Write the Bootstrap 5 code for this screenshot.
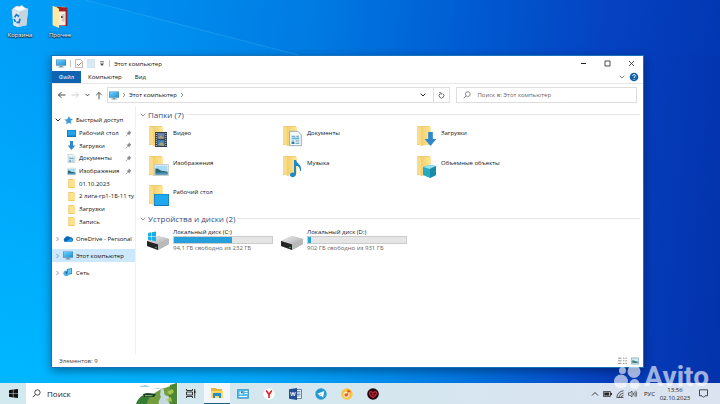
<!DOCTYPE html>
<html lang="ru">
<head>
<meta charset="utf-8">
<meta name="viewport" content="width=device-width, initial-scale=1">
<title>Этот компьютер</title>
<link href="https://cdn.jsdelivr.net/npm/bootstrap@5.3.0/dist/css/bootstrap.min.css" rel="stylesheet">
<style>
body{font-family:"Open Sans","Noto Sans",sans-serif;font-size:6px;line-height:8px;color:#111;overflow:hidden}
a{color:inherit;text-decoration:none}
button{border:0;background:none;padding:0;color:inherit;font:inherit}
svg{display:block;flex:none}
input::placeholder{color:inherit;opacity:1}
.desktop{background:radial-gradient(ellipse 85% 90% at 0 100%,#00b7ff 0,#00b2ffcc 38%,#00a8ff00 100%),linear-gradient(95deg,#00a0f8 0,#0094f2 18%,#007ee4 42%,#0060d4 60%,#0642c2 80%,#0332ab 100%)}
.ray{inset:0;width:100%;height:100%}
.shortcuts{padding:4px 0 0 0}
.shortcut{width:40px;color:#fff;gap:2px;text-shadow:0 1px 1px #000,0 0 2px #000}
.win{inset:55px 76px 15px 51px;background:#fff;border:1px solid #1674bd;box-shadow:0 3px 9px #0016;overflow:hidden}
.titlebar{height:15px}
.titletools{gap:4px;padding-left:4px}
.rule{width:1px;height:7px;background:#c4c4c4}
.winbtn{width:24px;height:15px}
.tabs{height:13px;border-bottom:1px solid #e8e8e8}
.tab-file{width:29px;background:#0f63b0;color:#fff;margin-right:7px}
.tab-next{margin-right:13px}
.tabs button{height:12px}
.navrow{height:22px;padding:3px 6px 3px 5px;gap:6px}
.arrows{gap:5px;width:44px}
.address{flex:355 1 0;border:1px solid #dedede;padding-left:1px;gap:3px}
.finder{flex:180 1 0;border:1px solid #dedede;padding-left:6px;gap:6px;color:#666}
.plain{border:0;outline:0;background:none;padding:0;color:inherit;font:inherit;min-width:0}
.refresh{width:16px;border-left:1px solid #dedede!important}
.side{width:84px;padding-top:8px;border-right:1px solid #f0f0f0;gap:4px}
.quick{height:114px}
.side a{gap:3px;white-space:nowrap}
.side .quick a{flex:1 1 0}
.side .deep{padding-left:15px}
.side .top{padding-left:3px;height:13px}
.side .chosen{background:#cce8ff}
.pin{margin-left:auto;margin-right:3px}
.files{padding:3px 3px 0 4px}
.section-title{font-size:8px;line-height:11px;font-weight:400;color:#354f7c;margin:0;gap:2px}
.section-title::after{content:"";flex:1;height:1px;background:#e7e7e7}
.tiles{display:grid;grid-template-columns:repeat(auto-fill,134px);padding-left:8px}
.folders{height:93px;grid-auto-rows:1fr;padding-top:4px}
.tile{gap:3px;padding-top:1px}
.folders .tile span{padding-top:4px}
.drives{padding-left:6px;padding-top:4px}
.drive{gap:3px}
.meter{width:100px;height:8px;border-radius:0;background:#e5e5e5;border:1px solid #ccc}
.meter .progress-bar{background:#26a0da}
.muted{color:#666}
.status{height:13px;padding:0 4px 0 7px;color:#444}
.taskbar{height:21px;background:linear-gradient(90deg,#d2e9ef,#d6e6ef 60%,#dbe3f1);color:#222}
.start{width:26px}
.seek{width:152px;background:#fff;padding-left:6px;gap:6px;font-size:8px}
.app{width:26px}
.app-on{background:#f1f7fa!important;border-bottom:1px solid #1c5f86!important}
.tray{gap:4px}
.lang{margin:0 2px 0 3px}
.clock{width:36px;text-align:center;margin-right:6px}
.notes{padding-right:12px!important}
.mark-logo{right:11px;bottom:11px;color:#fff;opacity:.62;gap:3px;font:700 28px/32px Roboto,Arial,sans-serif;pointer-events:none}
</style>
<script src="https://cdn.jsdelivr.net/npm/bootstrap@5.3.0/dist/js/bootstrap.bundle.min.js"></script>
</head>
<body class="d-flex flex-column vh-100">
<svg width="0" height="0" class="position-absolute" aria-hidden="true">
<defs>
<linearGradient id="fy" x1="0" x2="1"><stop stop-color="#f3cf68"/><stop offset="1" stop-color="#ffe7a0"/></linearGradient>
<linearGradient id="sc" x1="0" y1="0" x2="1" y2="1"><stop stop-color="#72d3fa"/><stop offset="1" stop-color="#1c94d8"/></linearGradient>
<linearGradient id="mt" x1="0" y1="0" x2="1" y2="1"><stop stop-color="#f1f1f1"/><stop offset="1" stop-color="#a8a8a8"/></linearGradient>
<symbol id="pc" viewBox="0 0 10 9"><path d="M0 .5h10v6.2H0z" fill="#4a87a8"/><path d="M.6 1h8.8v5H.6z" fill="url(#sc)"/><path d="M4 6.7h2v1H4zM2.4 7.6h5.2v.8H2.4z" fill="#6e96aa"/></symbol>
<symbol id="fold" viewBox="0 0 22 22"><path d="M1 1h13v18l-2 1H1z" fill="#f0cd74"/><path d="M1 1l4 2v18l-4-3z" fill="#f8dc89"/><path d="M5 2h10v17l-10 2z" fill="url(#fy)"/></symbol>
<symbol id="sf" viewBox="0 0 9 10"><path d="M1 0h5l2 1v9H1z" fill="#f0c75e"/><path d="M2 1h6v8H2z" fill="#ffe28d"/></symbol>
<symbol id="down" viewBox="0 0 10 12"><path d="M3 0h4v6h3l-5 6-5-6h3z" fill="#2f87cd"/></symbol>
<symbol id="doc" viewBox="0 0 10 12"><path d="M.5.5h6.3l2.7 2.8v8.2h-9z" fill="#f7fbfd" stroke="#91a7b5" stroke-width=".7"/><path d="M2 4.2h2.8M5.6 4.2h2M2 8h2M5 8h3M5 9.7h3" stroke="#4e96b8" stroke-width=".8"/><path d="M2 5.2h6v1.5H2z" fill="#61b5d5"/><path d="M2 8.6h2.2v1.6H2z" fill="#2c789f"/></symbol>
<symbol id="img" viewBox="0 0 14 11"><path d="M.4.4h13.2v10.2H.4z" fill="#fff" stroke="#b6bec4" stroke-width=".7"/><path d="M1.3 1.3h11.4v8.4H1.3z" fill="#a9dbf5"/><path d="M1.3 4.2c3-.5 4.4 2 6.4 2.2 2 .1 3 .2 5 .8v2.5H1.3z" fill="#2b676b"/><path d="M1.3 7.8c4 .6 7-.5 11.4.5v1.4H1.3z" fill="#4d93bd"/></symbol>
<symbol id="pinner" viewBox="0 0 7 7"><path d="M4 .6 6.4 3l-.8.2-1 1.2-.2 1.1L1.6 2.7l1.1-.3L3.8 1.3z" fill="#858b91"/><path d="M2.8 4.2.7 6.3" stroke="#858b91" stroke-width=".7"/></symbol>
<symbol id="rt" viewBox="0 0 4 6"><path d="m1 1 2 2-2 2" fill="none" stroke="#777" stroke-width=".8"/></symbol>
<symbol id="dn" viewBox="0 0 6 4"><path d="m.7.7 2.3 2.3L5.3.7" fill="none" stroke="currentColor" stroke-width=".9"/></symbol>
<symbol id="mag" viewBox="0 0 9 9"><circle cx="5.4" cy="3.5" r="2.7" fill="none" stroke="currentColor" stroke-width=".8"/><path d="M3.4 5.5.8 8.2" stroke="currentColor" stroke-width=".9"/></symbol>
<symbol id="hdd" viewBox="0 0 24 19"><path d="m1 9 11-5 11 3v5l-11 6L1 14z" fill="#a3a3a3"/><path d="m1 9 11-5 11 3-11 5.5z" fill="url(#mt)"/><path d="m1 9 11 3.5V18L1 14z" fill="#252525"/><path d="M12 12.5 23 7v5l-11 6z" fill="#bababa"/><circle cx="10" cy="15.5" r=".7" fill="#6fd47a"/></symbol>
</defs></svg>

<main class="desktop position-relative flex-grow-1">
<svg class="ray position-absolute" viewBox="0 0 720 383" preserveAspectRatio="none" aria-hidden="true"><path d="M85 0 300 55H720V0z" fill="#005bd0" opacity=".07"/><path d="M85 0 310 58" stroke="#5cc8ff" stroke-width="1" opacity=".25"/></svg>
<div class="shortcuts d-flex position-relative">
<a href="#" class="shortcut d-flex flex-column align-items-center"><svg width="20" height="25" viewBox="0 0 22 27"><path d="M2 6 9 2l11 3-2 18-9 2-5-2z" fill="#dce7ee"/><path d="m2 6 8 3 10-4-2 18-9 2-5-2z" fill="#c4d5df"/><path d="m2 6 8 3-1 16-5-2z" fill="#dbe7ee"/><path d="m3 5 4-3 3 1 3-2 3 3 3 1-9 3z" fill="#fafcfd" stroke="#b8c7d1" stroke-width=".5"/><path d="m5 14.5 2-3 3 2M11 16l-1 4H7M6 19.5l-1.500-3" fill="none" stroke="#1979c5" stroke-width="1.8"/></svg><span>Корзина</span></a>
<a href="#" class="shortcut d-flex flex-column align-items-center"><svg width="20" height="25" viewBox="0 0 20 27"><path d="M3 3h12v19H3z" fill="#edc259"/><path d="m7 3 11 1v20L7 23z" fill="#a41d20"/><path d="M8 8h8v15H8z" fill="#f7eee4"/><path d="M12 11h3v8h-3z" fill="#d8c6b9"/><path d="m2 2 7 3v21l-7-3z" fill="#ffe9a3"/><circle cx="12" cy="14" r="1" fill="#333"/></svg><span>Прочее</span></a>
</div>

<section class="win position-absolute d-flex flex-column" aria-label="Этот компьютер">
<header class="titlebar d-flex align-items-center">
<div class="titletools d-flex align-items-center flex-grow-1">
<svg width="10" height="9"><use href="#pc"/></svg><i class="rule"></i>
<button aria-label="Свойства"><svg width="8" height="9" viewBox="0 0 8 9"><path d="M.5.5h5l2 2v6h-7z" fill="#fff" stroke="#a7a7a7" stroke-width=".8"/><path d="m2 5 1.5 1.5 3-3" fill="none" stroke="#df6639"/></svg></button>
<button aria-label="Новая папка"><svg width="8" height="9" viewBox="0 0 8 9"><path d="M.5.5h7v8h-7z" fill="#dbe8f5" stroke="#ccdcea" stroke-width=".7"/></svg></button>
<button aria-label="Настройка панели"><svg width="6" height="6" viewBox="0 0 6 6"><path d="M1 .8h4" stroke="#444" stroke-width=".8"/><path d="M1 2.4h4L3 5z" fill="#444"/></svg></button><i class="rule"></i>
<span>Этот компьютер</span></div>
<button class="winbtn d-flex align-items-center justify-content-center" aria-label="Свернуть"><svg width="7" height="7"><path d="M1 3.5h5" stroke="#222"/></svg></button>
<button class="winbtn d-flex align-items-center justify-content-center" aria-label="Развернуть"><svg width="7" height="7"><path d="M1 1h5v5H1z" fill="none" stroke="#222" stroke-width=".8"/></svg></button>
<button class="winbtn d-flex align-items-center justify-content-center" aria-label="Закрыть"><svg width="7" height="7"><path d="m1 1 5 5M6 1 1 6" stroke="#222" stroke-width=".8"/></svg></button>
</header>
<div class="tabs d-flex align-items-center">
<button class="tab-file">Файл</button><button class="tab-next">Компьютер</button><button>Вид</button>
<button class="ms-auto me-1 text-secondary" aria-label="Развернуть ленту"><svg width="6" height="4"><use href="#dn"/></svg></button>
<button class="me-1" aria-label="Справка"><svg width="10" height="10" viewBox="0 0 10 10"><circle cx="5" cy="5" r="4.3" fill="#1264a8"/><path d="M3.6 3.8c.2-1.8 3-1.5 2.8.1C6.3 4.8 5 4.9 5 6M5 7v.8" fill="none" stroke="#fff"/></svg></button>
</div>
<div class="navrow d-flex">
<div class="arrows d-flex align-items-center">
<button aria-label="Назад"><svg width="9" height="8" viewBox="0 0 9 8"><path d="M8.5 4h-7M4.3 1.2 1.5 4l2.8 2.8" fill="none" stroke="#333" stroke-width=".9"/></svg></button>
<button aria-label="Вперёд"><svg width="9" height="8" viewBox="0 0 9 8"><path d="M.5 4h7M4.7 1.2 7.5 4 4.7 6.8" fill="none" stroke="#ccc" stroke-width=".9"/></svg></button>
<button aria-label="Журнал"><svg width="5" height="4" viewBox="0 0 6 4"><use href="#dn"/></svg></button>
<button aria-label="Вверх"><svg width="8" height="9" viewBox="0 0 8 9"><path d="M4 8.4v-7M1.2 4.2 4 1.4l2.8 2.8" fill="none" stroke="#444" stroke-width=".9"/></svg></button>
</div>
<div class="address d-flex align-items-center"><svg width="10" height="9"><use href="#pc"/></svg><svg width="4" height="6"><use href="#rt"/></svg><a href="#">Этот компьютер</a><svg width="4" height="6"><use href="#rt"/></svg>
<button class="ms-auto me-1" aria-label="Показать адреса"><svg width="6" height="4"><use href="#dn"/></svg></button>
<button class="refresh align-self-stretch d-flex align-items-center justify-content-center" aria-label="Обновить"><svg width="7" height="7" viewBox="0 0 7 7"><path d="M4.9 1.7A2.4 2.4 0 1 1 2.1 1.7M1.3.8h1.9v2" fill="none" stroke="#444" stroke-width=".8"/></svg></button></div>
<label class="finder d-flex align-items-center"><svg width="8" height="8"><use href="#mag"/></svg><input class="plain flex-grow-1" type="text" placeholder="Поиск в: Этот компьютер" aria-label="Поиск в: Этот компьютер"></label>
</div>
<div class="d-flex flex-grow-1">
<nav class="side d-flex flex-column flex-shrink-0" aria-label="Области">
<div class="quick d-flex flex-column">
<a href="#" class="top d-flex align-items-center"><svg width="6" height="4"><use href="#dn"/></svg><svg width="9" height="9" viewBox="0 0 9 9"><path d="m5 0 1 2.6L9 3 6.7 5l.7 3-2.6-1.3L2.2 8.4 2.6 5.5.3 3.6l3-.4z" fill="#3d9adb"/></svg>Быстрый доступ</a>
<a href="#" class="deep d-flex align-items-center"><svg width="9" height="9" viewBox="0 0 9 9"><path d="M0 1h9v7H0z" fill="#1674ba"/><path d="M.6 1.5h7.8v5H.6z" fill="#23a4ee"/></svg>Рабочий стол<svg class="pin" width="7" height="7"><use href="#pinner"/></svg></a>
<a href="#" class="deep d-flex align-items-center"><svg width="9" height="9"><use href="#down"/></svg>Загрузки<svg class="pin" width="7" height="7"><use href="#pinner"/></svg></a>
<a href="#" class="deep d-flex align-items-center"><svg width="9" height="9"><use href="#doc"/></svg>Документы<svg class="pin" width="7" height="7"><use href="#pinner"/></svg></a>
<a href="#" class="deep d-flex align-items-center"><svg width="9" height="9"><use href="#img"/></svg>Изображения<svg class="pin" width="7" height="7"><use href="#pinner"/></svg></a>
<a href="#" class="deep d-flex align-items-center"><svg width="9" height="9"><use href="#sf"/></svg>01.10.2023</a>
<a href="#" class="deep d-flex align-items-center"><svg width="9" height="9"><use href="#sf"/></svg>2 лига-гр1-1Б-11 ту</a>
<a href="#" class="deep d-flex align-items-center"><svg width="9" height="9"><use href="#sf"/></svg>Загрузки</a>
<a href="#" class="deep d-flex align-items-center"><svg width="9" height="9"><use href="#sf"/></svg>Запись</a>
</div>
<a href="#" class="top d-flex align-items-center"><svg width="5" height="6" viewBox="0 0 4 6"><use href="#rt"/></svg><svg width="10" height="8" viewBox="0 0 10 8"><path d="M2.4 7A2.2 2.2 0 0 1 1.8 3 3.1 3.1 0 0 1 7 2.3 2.4 2.4 0 0 1 8.2 7z" fill="#0769ba"/><path d="M2.2 7h6A1.8 1.8 0 0 0 8 3.6z" fill="#28a5e9"/></svg>OneDrive - Personal</a>
<a href="#" class="top chosen d-flex align-items-center"><svg width="5" height="6" viewBox="0 0 4 6"><use href="#rt"/></svg><svg width="10" height="9"><use href="#pc"/></svg>Этот компьютер</a>
<a href="#" class="top d-flex align-items-center"><svg width="5" height="6" viewBox="0 0 4 6"><use href="#rt"/></svg><svg width="10" height="9" viewBox="0 0 10 9"><path d="m4 1 5-1v6l-5 1z" fill="#2d8cca"/><circle cx="3.2" cy="5.3" r="2.8" fill="#55afdb"/><path d="m2 4 3-1-1 4z" fill="#2574b8"/><path d="m5 1.8 3.2-.7v4L5 5.8z" fill="#65c9f3"/></svg>Сеть</a>
</nav>
<div class="files flex-grow-1">
<h2 class="section-title d-flex align-items-center"><svg width="6" height="4" color="#888"><use href="#dn"/></svg>Папки (7)</h2>
<div class="tiles folders">
<a href="#" class="tile d-flex"><svg width="22" height="24" viewBox="0 0 22 24"><use href="#fold" width="22" height="22"/><path d="M7 7h12v15H7z" fill="#343c47"/><path d="M9.5 8h7v6h-7z" fill="#677fba"/><path d="M9.5 15h7v6h-7z" fill="#3e83c1"/><path d="m10 13 3-3 3 4zM10 20l3-3 3 2v2z" fill="#b2a35c"/><path d="M8.3 8v13M17.8 8v13" stroke="#ccd3da" stroke-dasharray="1 1"/></svg><span>Видео</span></a>
<a href="#" class="tile d-flex"><svg width="22" height="24" viewBox="0 0 22 24"><use href="#fold" width="22" height="22"/><use href="#doc" x="7" y="5" width="13" height="17"/></svg><span>Документы</span></a>
<a href="#" class="tile d-flex"><svg width="22" height="24" viewBox="0 0 22 24"><use href="#fold" width="22" height="22"/><use href="#down" x="8" y="7" width="13" height="14"/></svg><span>Загрузки</span></a>
<a href="#" class="tile d-flex"><svg width="22" height="24" viewBox="0 0 22 24"><use href="#fold" width="22" height="22"/><use href="#img" x="6" y="9" width="15" height="12"/></svg><span>Изображения</span></a>
<a href="#" class="tile d-flex"><svg width="22" height="24" viewBox="0 0 22 24"><use href="#fold" width="22" height="22"/><path d="M12 5h2c1 4 6 4 5 11h-1c0-4-2-5-4-5v8c0 4-6 4-6 1 0-2 2-3 4-2z" fill="#2188cb"/></svg><span>Музыка</span></a>
<a href="#" class="tile d-flex"><svg width="22" height="24" viewBox="0 0 22 24"><use href="#fold" width="22" height="22"/><path d="m7 12 6-2 7 1v9l-6 3-7-3z" fill="#27a9c6"/><path d="m7 12 6-2 7 1-6 3z" fill="#90e4ed"/><path d="m14 14 6-3v9l-6 3z" fill="#168ca9"/></svg><span>Объемные объекты</span></a>
<a href="#" class="tile d-flex"><svg width="22" height="24" viewBox="0 0 22 24"><use href="#fold" width="22" height="22"/><path d="M6 10h15v12H6z" fill="#1774ae"/><path d="M6.6 10.5h13.8v10.5H6.6z" fill="#20a8ef"/></svg><span>Рабочий стол</span></a>
</div>
<h2 class="section-title d-flex align-items-center"><svg width="6" height="4" color="#888"><use href="#dn"/></svg>Устройства и диски (2)</h2>
<div class="tiles drives">
<a href="#" class="drive d-flex"><svg width="24" height="25" viewBox="0 0 24 25"><use href="#hdd" y="4" width="24" height="19"/><path d="m2 5 3.5-.7v3.8H2zM6 4.2l4-.7v4.6H6zM2 8.6h3.5v3.8L2 11.7zM6 8.6h4v4.6l-4-.7z" fill="#17aee9"/></svg><span><span class="d-block">Локальный диск (C:)</span><span class="progress meter" role="progressbar" aria-label="Занято на диске C" aria-valuenow="59" aria-valuemin="0" aria-valuemax="100"><span class="progress-bar" style="width:59%"></span></span><span class="d-block muted">94,1 ГБ свободно из 232 ГБ</span></span></a>
<a href="#" class="drive d-flex"><svg width="24" height="25" viewBox="0 0 24 25"><use href="#hdd" y="4" width="24" height="19"/></svg><span><span class="d-block">Локальный диск (D:)</span><span class="progress meter" role="progressbar" aria-label="Занято на диске D" aria-valuenow="3" aria-valuemin="0" aria-valuemax="100"><span class="progress-bar" style="width:3%"></span></span><span class="d-block muted">902 ГБ свободно из 931 ГБ</span></span></a>
</div>
</div>
</div>
<footer class="status d-flex align-items-center"><span>Элементов: 9</span>
<button class="ms-auto me-1" aria-label="Таблица"><svg width="9" height="8" viewBox="0 0 9 8"><path d="M0 1.2h3.5M0 3.8h3.5M0 6.4h3.5M5 1.2h1.5M5 3.8h1.5M5 6.4h1.5M7.5 1.2H9M7.5 3.8H9M7.5 6.4H9" stroke="#888" stroke-width=".9"/></svg></button>
<button aria-label="Крупные значки"><svg width="8" height="8" viewBox="0 0 8 8"><path d="M.4.9h7.2v6.2H.4z" fill="#cfeaf5" stroke="#79a4b4" stroke-width=".7"/><path d="M1.3 3.5c2-1 2.4 1.5 5.4 1v1.6H1.3z" fill="#3c7d7d"/></svg></button></footer>
</section>
</main>

<footer class="taskbar d-flex flex-shrink-0">
<button class="start d-flex align-items-center justify-content-center" aria-label="Пуск"><svg width="9" height="9" viewBox="0 0 9 9"><path d="m0 1.2 3.9-.6v3.6H0zM4.4.6 9 0v4.2H4.4zM0 4.8h3.9v3.6L0 7.8zM4.4 4.8H9V9l-4.6-.6z" fill="#111"/></svg></button>
<label class="seek d-flex align-items-center"><svg width="9" height="9"><use href="#mag"/></svg><input class="plain flex-grow-1" type="search" placeholder="Поиск" aria-label="Поиск">
<svg width="42" height="21" viewBox="0 0 42 21"><path d="M3 4c2-2 4-1 6-2 3 0 3 2 6 2zM16 6l6-1 3 1z" fill="#aacbe6"/><path d="M0 21c3-9 10-11 18-10l12 10z" fill="#357d34"/><path d="M11 21c0-7 9-12 14-15 5-1 9-3 16-6v21z" fill="#749e3d"/><path d="M25 5c6 1 0 7 7 8 4 2-2 4 2 8H23c-2-4 4-6 1-9z" fill="#c3d9df"/><path d="M34 2 41 0v21h-7c2-6-4-8 0-13z" fill="#4c8733"/><path d="m7 11 4-1 9 1-2 3H8z" fill="#173c27"/><path d="m9 12 8 .3-1 1H9z" fill="#8eb65b"/><path d="m31 9 5-3 2 3-4 3zM30 17l5-3 1 5z" fill="#a6c64a"/></svg></label>
<button class="app d-flex align-items-center justify-content-center" aria-label="Представление задач"><svg width="10" height="9" viewBox="0 0 10 9"><path d="M.5 0v1.5h6V0M.5 9V7.5h6V9M.5 3h6v3h-6zM8.7 0v9" fill="none" stroke="#222" stroke-width=".9"/><path d="M8 2h1.5v2H8z" fill="#222"/></svg></button>
<button class="app app-on d-flex align-items-center justify-content-center" aria-label="Проводник"><svg width="12" height="12" viewBox="0 0 12 12"><path d="M0 1h5l1 1h5v9H0z" fill="#e9b63d"/><path d="M0 4h12v7H0z" fill="#ffda65"/><path d="M2 6h8v5H8V9H4v2H2z" fill="#278cc9"/></svg></button>
<button class="app d-flex align-items-center justify-content-center" aria-label="Панель управления"><svg width="12" height="10" viewBox="0 0 12 10"><path d="M.5.5h11v8.8H.5z" fill="#53b9ed" stroke="#378cb9" stroke-width=".7"/><circle cx="4" cy="4" r="1.8" fill="#d5f1ff"/><path d="M4 4V2.2A1.8 1.8 0 0 1 5.8 4z" fill="#126ba5"/><path d="M7.5 2.5h3M7.5 4.5h3M2 7.5h8" stroke="#fff"/></svg></button>
<button class="app d-flex align-items-center justify-content-center" aria-label="Яндекс Браузер"><svg width="12" height="12" viewBox="0 0 12 12"><circle cx="6" cy="6" r="5.7" fill="#fff"/><path d="m3.2 2.5 2.8 4 2.8-4M6 6v4" fill="none" stroke="#e61e27" stroke-width="1.6"/></svg></button>
<button class="app d-flex align-items-center justify-content-center" aria-label="Word"><svg width="13" height="12" viewBox="0 0 13 12"><path d="M6 1.5h6.5v9H6z" fill="#fff" stroke="#2d5395" stroke-width=".7"/><path d="M8 3.5h3.5M8 5h3.5M8 6.5h3.5M8 8h3.5" stroke="#3964a2" stroke-width=".7"/><path d="m0 1.3 8-1.3v12l-8-1.3z" fill="#254f92"/><path d="m1.6 4 1 4L4 4.3 5.3 8l1-4" fill="none" stroke="#fff" stroke-width=".9"/></svg></button>
<button class="app d-flex align-items-center justify-content-center" aria-label="Telegram"><svg width="12" height="12" viewBox="0 0 12 12"><circle cx="6" cy="6" r="5.7" fill="#2498d2"/><path d="m2.3 5.7 7-2.7-1.2 6.4-2.2-1.6-1.1 1L4.5 7z" fill="#fff"/><path d="m4.5 7 3.3-2.5-2.2 3z" fill="#a4cce2"/></svg></button>
<button class="app d-flex align-items-center justify-content-center" aria-label="Яндекс Музыка"><svg width="12" height="12" viewBox="0 0 12 12"><circle cx="6" cy="6" r="5.7" fill="#f8c43e"/><circle cx="5.4" cy="6.8" r="3" fill="#fff1be"/><circle cx="5.2" cy="7" r="1.8" fill="#ed5d32"/><path d="M6.5 7V1.5l2.8 1.6v1.4L7.3 3.7V7z" fill="#dc4931"/></svg></button>
<button class="app d-flex align-items-center justify-content-center" aria-label="Игра"><svg width="12" height="12" viewBox="0 0 12 12"><circle cx="6" cy="6" r="5.8" fill="#240b12"/><path d="M6 9.5C1.5 7 2 3.5 4.2 3.5L6 5l1.8-1.5C10 3.5 10.5 7 6 9.5z" fill="none" stroke="#d32637" stroke-width="1.2"/><path d="M4 6.3h4M6 5v3" stroke="#bf2230" stroke-width=".8"/></svg></button>
<div class="tray d-flex align-items-center ms-auto">
<button aria-label="Скрытые значки"><svg width="8" height="6" viewBox="0 0 8 6"><path d="m1 4.5 3-3 3 3" fill="none" stroke="#222" stroke-width=".9"/></svg></button>
<svg width="9" height="6" viewBox="0 0 9 6"><path d="M.4.6h7v4.8h-7z" fill="none" stroke="#222" stroke-width=".8"/><path d="M1.3 1.5h4.8v3H1.3zM7.7 2H9v2H7.7z" fill="#222"/></svg>
<svg width="8" height="8" viewBox="0 0 8 8"><path d="M.8 7.5A7 7 0 0 1 7.5.8M3 7.5A5 5 0 0 1 7.5 3M5.1 7.5a3 3 0 0 1 2.4-2.3M.8 7.5h6.7" fill="none" stroke="#333" stroke-width=".8"/></svg>
<svg width="9" height="8" viewBox="0 0 9 8"><path d="M.5 2.8H2L4 1v6L2 5.2H.5zM5.2 2.7q1 1.3 0 2.6M6.5 1.7q1.8 2.3 0 4.6M7.8.8q2 3.2 0 6.4" fill="none" stroke="#333" stroke-width=".7"/></svg>
<span class="lang">РУС</span></div>
<time class="clock align-self-center" datetime="2023-10-02T13:56">13:56<br>02.10.2023</time>
<button class="notes" aria-label="Уведомления"><svg width="9" height="9" viewBox="0 0 9 9"><path d="M.5.8h8v6H6L4.5 8.3 3 6.8H.5z" fill="none" stroke="#222" stroke-width=".8"/></svg></button>
</footer>
<div class="mark-logo position-absolute d-flex align-items-center"><svg width="27" height="25" viewBox="0 0 27 25"><circle cx="7" cy="16.5" r="7" fill="#fff"/><circle cx="8.5" cy="5.5" r="3.5" fill="#fff"/><circle cx="20" cy="6.5" r="6.5" fill="#fff"/><circle cx="20.5" cy="19" r="5" fill="#fff"/></svg><span>Avito</span></div>
</body>
</html>
